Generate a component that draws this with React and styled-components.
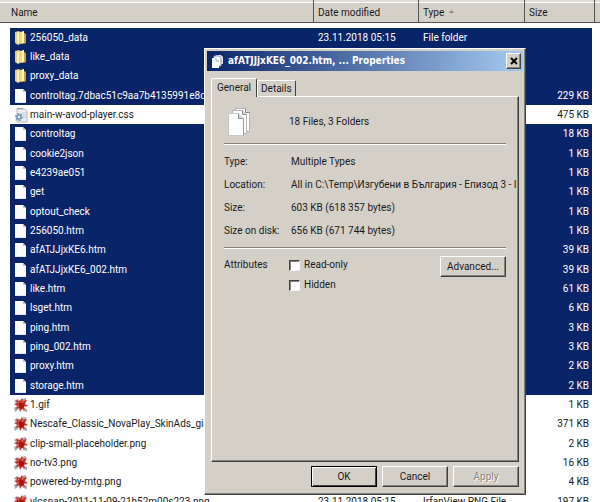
import React, { useState } from "react";
import styled, { createGlobalStyle, css } from "styled-components";

const files = [
    { name: "256050_data", icon: "folder", date: "23.11.2018 05:15", type: "File folder", size: "", selected: true },
    { name: "like_data", icon: "folder", size: "", selected: true },
    { name: "proxy_data", icon: "folder", size: "", selected: true },
    { name: "controltag.7dbac51c9aa7b4135991e8dae", icon: "file", size: "229 KB", selected: true },
    { name: "main-w-avod-player.css", icon: "css", size: "475 KB", selected: false },
    { name: "controltag", icon: "file", size: "18 KB", selected: true },
    { name: "cookie2json", icon: "file", size: "1 KB", selected: true },
    { name: "e4239ae051", icon: "file", size: "1 KB", selected: true },
    { name: "get", icon: "file", size: "1 KB", selected: true },
    { name: "optout_check", icon: "file", size: "1 KB", selected: true },
    { name: "256050.htm", icon: "file", size: "1 KB", selected: true },
    { name: "afATJJjxKE6.htm", icon: "file", size: "39 KB", selected: true },
    { name: "afATJJjxKE6_002.htm", icon: "file", size: "39 KB", selected: true },
    { name: "like.htm", icon: "file", size: "61 KB", selected: true },
    { name: "lsget.htm", icon: "file", size: "6 KB", selected: true },
    { name: "ping.htm", icon: "file", size: "3 KB", selected: true },
    { name: "ping_002.htm", icon: "file", size: "3 KB", selected: true },
    { name: "proxy.htm", icon: "file", size: "2 KB", selected: true },
    { name: "storage.htm", icon: "file", size: "2 KB", selected: true },
    { name: "1.gif", icon: "image", size: "1 KB", selected: false },
    { name: "Nescafe_Classic_NovaPlay_SkinAds_girl_", icon: "image", size: "371 KB", selected: false },
    { name: "clip-small-placeholder.png", icon: "image", size: "2 KB", selected: false },
    { name: "no-tv3.png", icon: "image", size: "16 KB", selected: false },
    { name: "powered-by-mtg.png", icon: "image", size: "4 KB", selected: false },
    { name: "vlcsnap-2011-11-09-21h52m00s223.png", icon: "image", date: "23.11.2018 05:15", type: "IrfanView PNG File", size: "197 KB", selected: false },
];

const FolderIcon = () => (
    <svg width="14" height="16" viewBox="0 0 14 16" aria-hidden="true">
        <path d="M1 2l4-1 1 1v12l-2 1-3-2z" fill="#e9cf74" />
        <path d="M3 3l2-1v12l-2-1z" fill="#fdf3ba" />
        <path d="M6 2l4-1v12l-4 1z" fill="#f0d97e" />
        <path d="M8 2l2-1v12l-2 1z" fill="#fff4bd" />
        <path d="M10 3l2 1v9l-2 1z" fill="#c6a548" />
        <path d="M12 8v5h-1V8z" fill="#8aa5b4" />
    </svg>
);

const FileIcon = () => (
    <svg width="14" height="16" viewBox="0 0 14 16" aria-hidden="true">
        <path d="M1 1h8l3 3v11H1z" fill="#fbfbff" />
        <path d="M9 1v3h3z" fill="#b9bfd0" />
        <path d="M1 14h11v1H1z" fill="#e2e4ee" />
    </svg>
);

const CssIcon = () => (
    <svg width="14" height="16" viewBox="0 0 14 16" aria-hidden="true">
        <path d="M3 2h8l2 2v11H3z" fill="#eeeff0" stroke="#b6babe" />
        <path d="M3 2l1-1 1 1 1-1 1 1 1-1 1 1" fill="none" stroke="#999" />
        <path d="M8 6h4M9 8h3M9 10h3" stroke="#c3c7cc" />
        <circle cx="5" cy="10" r="3" fill="#d5e6f2" stroke="#7fa0ba" strokeWidth="2" strokeDasharray="2 1" />
        <circle cx="5" cy="10" r="2" fill="#e8f1f7" stroke="#5b7f9b" />
    </svg>
);

const ImageIcon = () => (
    <svg width="14" height="16" viewBox="0 0 14 16" aria-hidden="true">
        <path d="M8 2l4-1v3l-3 2zM0 4l3-2 2 2-2 3zM0 11l4-2 1 3-4 3zM9 11l4 1v3l-4-1z" fill="#aaa8a8" />
        <path d="M4 2l2 2 2-3 1 3 4-1-2 4 3 2-4 1 1 3-3-1-2 3-1-4-3 1 1-3-3-2 3-1-1-3 3 1z" fill="#c8302a" />
        <path d="M5 6l4-1 1 4-2 3-3-2z" fill="#a51411" />
        <path d="M4 5l1 1M10 9l1 1M3 9h2M9 4l-1 2" stroke="#ef8078" />
    </svg>
);

const PagesIcon = () => (
    <svg width="28" height="28" viewBox="0 0 28 28" aria-hidden="true">
        <path d="M7.500 .5h10l4 4v19h-14z" fill="#fff" stroke="#b3b3b3" />
        <path d="M17.500 .5v4h4" fill="#ddd" stroke="#8e8e8e" />
        <path d="M4.500 2.500h10l4 4v19h-14z" fill="#fff" stroke="#b3b3b3" />
        <path d="M14.500 2.500v4h4" fill="#ddd" stroke="#8e8e8e" />
        <path d="M.5 5.500h10l5 5v17H.5z" fill="#fdfdfd" stroke="#c8c8c8" />
        <path d="M10.500 5.500v5h5" fill="#ddd" stroke="#8e8e8e" />
        <path d="M15.500 10.500v17" stroke="#9c9c9c" />
    </svg>
);

const SmallPagesIcon = () => (
    <svg width="13" height="13" viewBox="0 0 13 13" aria-hidden="true">
        <path d="M5 0h5l2 2v7H5z" fill="#dfe3ee" />
        <path d="M3 1h5l2 2v8H3z" fill="#fff" stroke="#9aa3bd" />
        <path d="M1 3h4l3 3v7H1z" fill="#fff" />
        <path d="M5 3v3h3" fill="none" stroke="#9aa3bd" />
    </svg>
);

const icons = {
    folder: FolderIcon,
    file: FileIcon,
    css: CssIcon,
    image: ImageIcon,
};

const FileRow = ({ file }) => {
    const Icon = icons[file.icon];
    return (
        <Row $selected={file.selected}>
            <Gutter />
            <Cell>
                <FileName>
                    <Icon />
                    {file.name}
                </FileName>
            </Cell>
            <Cell>{file.date}</Cell>
            <Cell>{file.type}</Cell>
            <Cell $right>{file.size}</Cell>
            <Gutter colSpan={2} />
        </Row>
    );
};

const App = () => {
    const [tab, setTab] = useState("general");
    const [readOnly, setReadOnly] = useState(false);
    const [hidden, setHidden] = useState(false);

    return (
        <Explorer>
            <GlobalStyle />
            <FileTable>
                <colgroup>
                    <Col $width="10px" />
                    <Col />
                    <Col $width="105px" />
                    <Col $width="106px" />
                    <Col $width="67px" />
                    <Col $width="3px" />
                    <Col $width="5px" />
                </colgroup>
                <thead>
                    <tr>
                        <HeadCell colSpan={2} $first>Name</HeadCell>
                        <HeadCell>Date modified</HeadCell>
                        <HeadCell>
                            Type
                            <SortArrow width="5" height="3" viewBox="0 0 5 3" aria-hidden="true">
                                <path d="M0 3l2.500-3L5 3z" fill="#8a877f" />
                            </SortArrow>
                        </HeadCell>
                        <HeadCell colSpan={2}>Size</HeadCell>
                        <HeadCell as="td" $last />
                    </tr>
                </thead>
                <tbody>
                    {files.map((file) => (
                        <FileRow key={file.name} file={file} />
                    ))}
                </tbody>
            </FileTable>

            <Dialog role="dialog" aria-labelledby="dialog-title">
                <TitleBar>
                    <SmallPagesIcon />
                    <Title id="dialog-title">afATJJjxKE6_002.htm, ... Properties</Title>
                    <CloseButton aria-label="Close">
                        <svg width="8" height="8" viewBox="0 0 8 8" aria-hidden="true">
                            <path d="M1 1l6 6M7 1l-6 6" stroke="#000" strokeWidth="2" />
                        </svg>
                    </CloseButton>
                </TitleBar>
                <Tabs role="tablist">
                    <Tab role="tab" $active={tab === "general"} onClick={() => setTab("general")}>
                        General
                    </Tab>
                    <Tab role="tab" $active={tab === "details"} onClick={() => setTab("details")}>
                        Details
                    </Tab>
                </Tabs>
                <Panel>
                    <Summary>
                        <PagesIcon />
                        <span>18 Files, 3 Folders</span>
                    </Summary>
                    <Divider />
                    <Properties>
                        <dt>Type:</dt>
                        <dd>Multiple Types</dd>
                        <dt>Location:</dt>
                        <dd>All in C:\Temp\Изгубени в България - Епизод 3 - I</dd>
                        <dt>Size:</dt>
                        <dd>603 KB (618 357 bytes)</dd>
                        <dt>Size on disk:</dt>
                        <dd>656 KB (671 744 bytes)</dd>
                    </Properties>
                    <Divider />
                    <Attributes>
                        <AttributesTitle>Attributes</AttributesTitle>
                        <Checks>
                            <CheckLabel>
                                <Checkbox type="checkbox" checked={readOnly} onChange={(e) => setReadOnly(e.target.checked)} />
                                Read-only
                            </CheckLabel>
                            <CheckLabel>
                                <Checkbox type="checkbox" checked={hidden} onChange={(e) => setHidden(e.target.checked)} />
                                Hidden
                            </CheckLabel>
                        </Checks>
                        <Button>Advanced...</Button>
                    </Attributes>
                </Panel>
                <Footer>
                    <Button $default>OK</Button>
                    <Button>Cancel</Button>
                    <Button disabled>Apply</Button>
                </Footer>
            </Dialog>
        </Explorer>
    );
};

const GlobalStyle = createGlobalStyle`
  * {
    box-sizing: border-box;
  }
  body {
    margin: 0;
    background: #fff;
    color: #1a1a1a;
    font-family: Roboto, "Liberation Sans", sans-serif;
    font-size: 10px;
    line-height: 14px;
  }
  button, input {
    font: inherit;
    color: inherit;
  }
`;
const raised = css`
  border: 1px solid;
  border-color: #fff #404040 #404040 #fff;
  box-shadow: inset -1px -1px 0 #86837c;
`;
const Explorer = styled.main`
  position: relative;
  height: 100vh;
  overflow: hidden;
`;
const FileTable = styled.table`
  width: 100%;
  table-layout: fixed;
  border-collapse: separate;
  border-spacing: 0;

  tbody::before {
    content: "";
    display: block;
    height: 5px;
  }
`;
const Col = styled.col`
  width: ${(props) => props.$width || "auto"};
`;
const HeadCell = styled.th`
  height: 23px;
  padding: 4px 0 0 ${(props) => (props.$first ? "11px" : "4px")};
  background: linear-gradient(#dedbd4 2px, #fff 2px, #fff 3px, #d4d0c8 3px);
  border-right: ${(props) => (props.$last ? "none" : "1px solid #55534e")};
  border-bottom: 1px solid #55534e;
  font-weight: normal;
  text-align: left;
  white-space: nowrap;
`;
const SortArrow = styled.svg`
  margin: 0 0 3px 5px;
`;
const Gutter = styled.td`
  padding: 0;
`;
const Cell = styled.td`
  padding: 0 ${(props) => (props.$right ? "3px" : "0")} 0 4px;
  overflow: hidden;
  text-align: ${(props) => (props.$right ? "right" : "left")};
  white-space: nowrap;
`;
const Row = styled.tr`
  height: 19px;
  color: ${(props) => (props.$selected ? "#fff" : "#1a1a1a")};

  &:nth-child(3n) {
    height: 20px;
  }
  ${Cell} {
    background: ${(props) => (props.$selected ? "#0a246a" : "#fff")};
  }
`;
const FileName = styled.div`
  display: flex;
  align-items: center;
  gap: 2px;

  svg {
    flex: none;
  }
`;
const Dialog = styled.section`
  position: absolute;
  top: 48px;
  left: 204px;
  width: 322px;
  padding: 2px 2px 7px;
  background: #d4d0c8;
  ${raised}
`;
const TitleBar = styled.header`
  display: flex;
  align-items: center;
  height: 20px;
  padding: 0 2px 0 4px;
  gap: 4px;
  background: linear-gradient(to right, #0a246a, #a6caf0);
`;
const Title = styled.h1`
  flex: 1;
  margin: 0;
  color: #fff;
  font-family: "DejaVu Sans Condensed", "DejaVu Sans", sans-serif;
  font-stretch: condensed;
  font-size: 10px;
  font-weight: bold;
`;
const CloseButton = styled.button`
  display: flex;
  align-items: center;
  justify-content: center;
  width: 15px;
  height: 16px;
  padding: 0;
  background: #d4d0c8;
  ${raised}
`;
const Tabs = styled.div`
  display: flex;
  align-items: flex-end;
  height: 25px;
  padding: 0 4px;
`;
const Tab = styled.button`
  position: relative;
  z-index: ${(props) => (props.$active ? 1 : 0)};
  height: ${(props) => (props.$active ? "19px" : "16px")};
  margin-bottom: ${(props) => (props.$active ? "-1px" : "0")};
  padding: 0 ${(props) => (props.$active ? "5px" : "3px")};
  background: #d4d0c8;
  border: 1px solid;
  border-color: #fff #404040 #fff #fff;
  border-bottom: none;
  border-radius: 2px 2px 0 0;
`;
const Panel = styled.div`
  height: 366px;
  margin: 0 4px;
  padding: 8px 12px;
  background: #d4d0c8;
  ${raised}
`;
const Summary = styled.div`
  display: flex;
  align-items: center;
  height: 38px;
  padding: 0 0 4px 4px;
  gap: 33px;
`;
const Divider = styled.hr`
  height: 2px;
  margin: 0;
  border: none;
  border-top: 1px solid #86837c;
  border-bottom: 1px solid #fff;
`;
const Properties = styled.dl`
  display: grid;
  grid-template-columns: 67px minmax(0, 1fr);
  row-gap: 9px;
  margin: 0;
  padding: 10px 0 9px;

  dt, dd {
    margin: 0;
    white-space: nowrap;
  }
`;
const Attributes = styled.div`
  display: grid;
  grid-template-columns: 65px 1fr 66px;
  align-items: start;
  padding-top: 7px;
`;
const AttributesTitle = styled.span`
  padding-top: 2px;
`;
const Checks = styled.div`
  display: flex;
  flex-direction: column;
  gap: 6px;
  padding-top: 2px;
`;
const CheckLabel = styled.label`
  display: flex;
  align-items: center;
  gap: 4px;
`;
const Checkbox = styled.input`
  appearance: none;
  width: 11px;
  height: 11px;
  margin: 0;
  background: ${(props) => (props.checked ? "#404040" : "#fff")};
  border: 1px solid;
  border-color: #404040 #f4f2ee #f4f2ee #404040;
  box-shadow: inset 1px 1px 0 #86837c;
`;
const Button = styled.button`
  width: 66px;
  height: 21px;
  padding: 0;
  background: #d4d0c8;
  ${raised}
  ${(props) =>
      props.$default &&
      css`
        border-color: #000;
        box-shadow: inset 1px 1px 0 #fff, inset -1px -1px 0 #404040;
      `}

  &:disabled {
    color: #86837c;
    text-shadow: 1px 1px 0 #fff;
  }
`;
const Footer = styled.footer`
  display: flex;
  justify-content: flex-end;
  gap: 5px;
  padding: 4px 4px 0;
`;
export default App;
